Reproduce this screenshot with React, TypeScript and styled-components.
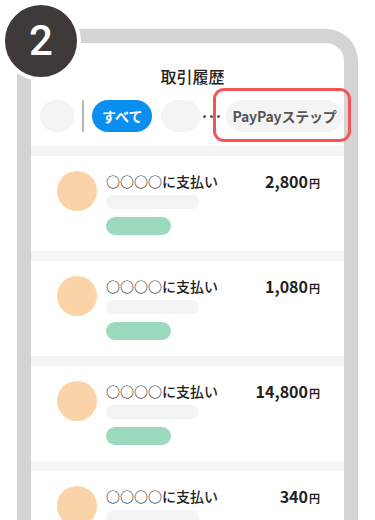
import * as React from "react";
import styled, { createGlobalStyle } from "styled-components";

const colors = {
  frame: "#d4d4d4",
  band: "#f5f5f5",
  chip: "#f4f4f4",
  text: "#222222",
  blue: "#0a8ff0",
  red: "#f25555",
  avatar: "#fbd3a8",
  tag: "#9bdabd",
  badge: "#3e3a39",
};

const GlobalStyle = createGlobalStyle`
  body {
    margin: 0;
    background: #ffffff;
    font-family: "Noto Sans CJK JP", "Noto Sans", sans-serif;
  }
`;

const Stage = styled.div`
  position: relative;
  width: 375px;
  height: 520px;
  overflow: hidden;
  background: #ffffff;
  padding: 29px 0 0 17px;
  box-sizing: border-box;
`;

const Phone = styled.div`
  width: 341px;
  height: 520px;
  box-sizing: border-box;
  border: 14px solid ${colors.frame};
  border-bottom: 0;
  border-radius: 32px 32px 0 0;
  background: #ffffff;
`;

const Title = styled.div`
  padding-top: 23px;
  padding-left: 10px;
  text-align: center;
  font-family: "Noto Sans CJK JP Medium", "Noto Sans CJK JP", sans-serif;
  font-size: 16px;
  line-height: 20px;
  font-weight: 500;
  color: ${colors.text};
`;

const FilterRow = styled.div`
  display: flex;
  align-items: center;
  height: 32px;
  margin-top: 14px;
  padding-left: 9px;
`;

const Chip = styled.div<{ $w: number; $ml?: number }>`
  width: ${p => p.$w}px;
  height: 32px;
  border-radius: 16px;
  background: ${colors.chip};
  margin-left: ${p => p.$ml ?? 0}px;
  flex-shrink: 0;
`;

const Divider = styled.div`
  flex-shrink: 0;
  width: 2px;
  height: 32px;
  margin-left: 8px;
  background: #b8b8b8;
`;

const Pill = styled.div<{ $active?: boolean; $ml: number }>`
  display: flex;
  align-items: center;
  justify-content: center;
  height: 32px;
  padding: 0 ${p => (p.$active ? 10 : 6)}px;
  margin-left: ${p => p.$ml}px;
  border-radius: 16px;
  background: ${p => (p.$active ? colors.blue : colors.chip)};
  color: ${p => (p.$active ? "#ffffff" : "#555555")};
  font-size: 14px;
  font-weight: 700;
  letter-spacing: ${p => (p.$active ? 0 : -0.2)}px;
  white-space: nowrap;
  flex-shrink: 0;
`;

const Dots = styled.div`
  display: flex;
  flex-shrink: 0;
  gap: 4px;
  margin-left: 2px;
  span {
    width: 3px;
    height: 3px;
    border-radius: 50%;
    background: #555555;
  }
`;

const List = styled.div`
  display: flex;
  flex-direction: column;
  gap: 10px;
  margin-top: 14px;
  padding-top: 10px;
  background: ${colors.band};
`;

const Item = styled.div`
  display: grid;
  grid-template-columns: 40px 1fr auto;
  column-gap: 9px;
  align-items: start;
  height: 95px;
  box-sizing: border-box;
  padding: 15px 24px 0 26px;
  background: #ffffff;
`;

const Avatar = styled.div`
  width: 40px;
  height: 40px;
  border-radius: 50%;
  background: ${colors.avatar};
`;

const Info = styled.div`
  display: flex;
  flex-direction: column;
`;

const Name = styled.div`
  font-family: "Noto Sans CJK JP Medium", "Noto Sans CJK JP", sans-serif;
  font-size: 14px;
  line-height: 20px;
  font-weight: 500;
  color: ${colors.text};
  white-space: nowrap;
`;

const Bar = styled.div<{ $w: number; $h: number; $mt: number; $color: string }>`
  width: ${p => p.$w}px;
  height: ${p => p.$h}px;
  margin-top: ${p => p.$mt}px;
  border-radius: ${p => p.$h / 2}px;
  background: ${p => p.$color};
`;

const Amount = styled.div`
  font-size: 16px;
  line-height: 20px;
  font-weight: 700;
  color: ${colors.text};
  white-space: nowrap;
  small {
    font-size: 11px;
    font-weight: 700;
    margin-left: 1px;
  }
`;

const Badge = styled.div`
  position: absolute;
  left: 1px;
  top: 1px;
  width: 72px;
  height: 72px;
  border: 4px solid #ffffff;
  border-radius: 50%;
  background: ${colors.badge};
  color: #ffffff;
  display: flex;
  align-items: center;
  justify-content: center;
  font-family: Roboto, "Noto Sans", sans-serif;
  font-size: 42px;
  font-weight: 500;
  line-height: 1;
`;

const Highlight = styled.div`
  position: absolute;
  left: 213px;
  top: 88px;
  width: 138px;
  height: 54px;
  box-sizing: border-box;
  border: 3.5px solid ${colors.red};
  border-radius: 11px;
`;

const payments = ["2,800", "1,080", "14,800", "340"];

export default function App() {
  return (
    <>
      <GlobalStyle />
      <Stage>
        <Phone>
          <Title>取引履歴</Title>
          <FilterRow>
            <Chip $w={34} />
            <Divider />
            <Pill $active $ml={8}>すべて</Pill>
            <Chip $w={40} $ml={9} />
            <Dots>
              <span />
              <span />
              <span />
            </Dots>
            <Pill $ml={6}>PayPayステップ</Pill>
          </FilterRow>
          <List>
            {payments.map(amount => (
              <Item key={amount}>
                <Avatar />
                <Info>
                  <Name>○○○○に支払い</Name>
                  <Bar $w={93} $h={14} $mt={4} $color={colors.chip} />
                  <Bar $w={65} $h={18} $mt={8} $color={colors.tag} />
                </Info>
                <Amount>
                  {amount}
                  <small>円</small>
                </Amount>
              </Item>
            ))}
          </List>
        </Phone>
        <Badge>2</Badge>
        <Highlight />
      </Stage>
    </>
  );
}
